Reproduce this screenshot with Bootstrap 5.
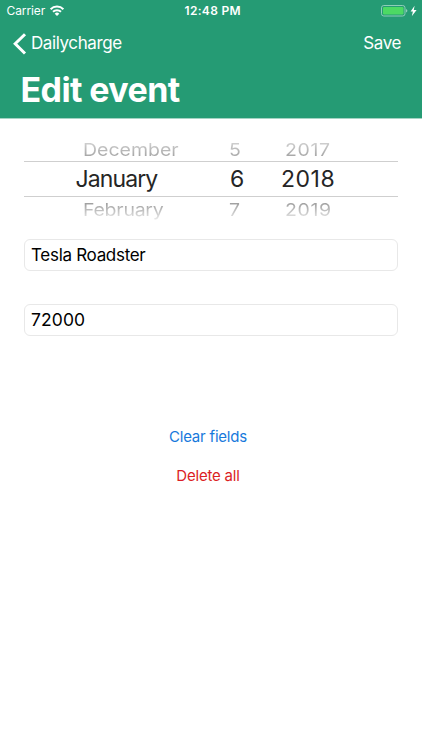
<!DOCTYPE html>
<html lang="en">
<head>
<meta charset="utf-8">
<meta name="viewport" content="width=device-width, initial-scale=1">
<title>Edit event</title>
<link href="https://cdn.jsdelivr.net/npm/bootstrap@5.3.0/dist/css/bootstrap.min.css" rel="stylesheet">
<style>
body{font-family:Inter,"Liberation Sans",sans-serif;color:#000;overflow:hidden}
.app-head{background:#259b74;height:119px;border-bottom:1px solid #a4d3c3}
.status{height:22px;font-size:12px;line-height:22px;display:grid;grid-template-columns:1fr auto 1fr;padding:0 4px 0 6.5px}
.carrier{letter-spacing:-.1px}
.clock{font-weight:600;letter-spacing:.3px;padding-left:1px}
.bar{height:43px;padding:0 21px 0 13px;font-size:17px;letter-spacing:-.4px}
.bar a{color:#fff;line-height:43px}
.title{font-size:34px;font-weight:700;line-height:50px;margin:0 0 0 20.5px;letter-spacing:-.6px}
.main{padding:21px 24px 0}
.wheel{display:grid;white-space:nowrap}
.wheel .side{height:21px;display:grid;grid-template-columns:59px 146px 56px 1fr;font-size:19.5px;line-height:21px}
.wheel .side span{transform:scaleY(.9);color:transparent;-webkit-background-clip:text;background-clip:text}
.wheel .side .year{letter-spacing:.6px}
.above span{background-image:linear-gradient(#d6d6d6 10%,#a0a0a0 90%);height:25px;padding-top:3px;margin-top:-3px}
.below span{background-image:linear-gradient(#999 15%,#e4e4e4 90%);padding-bottom:2px;height:25px;padding-top:3px}
.feb{letter-spacing:-.25px}
.wheel .current{height:36px;display:grid;grid-template-columns:51.5px 154.5px 51px 1fr;font-size:23px;line-height:35px;color:#252525;border-top:1px solid #cfcfcf;border-bottom:1px solid #cfcfcf}
.current .month{letter-spacing:-.9px}
.current .year{letter-spacing:.5px}
.field{height:32px;border:1px solid #e8e8e8;border-radius:6px;padding:0 6px;font-size:17px;letter-spacing:-.3px;color:#000}
.field:focus{box-shadow:none;color:#000}
.event-name{margin-top:21px}
.amount{margin-top:33px;font-size:17.5px;letter-spacing:.1px;padding-bottom:2px}
.acts{margin:91px 6px 0 0;gap:18.5px}
.link-act{font-size:15px;line-height:20px;letter-spacing:-.2px;padding:0;border:0}
.blue{color:#1779dc}.red{color:#db1e24}
</style>
</head>
<body class="bg-white">
<header class="app-head text-white">
  <div class="status">
    <div class="d-flex align-items-center"><span class="carrier">Carrier</span>
      <svg class="ms-1" width="16" height="12" viewBox="0 0 16 12" fill="none" stroke="#fff" stroke-width="2"><path d="M1.6 4.2a9 9 0 0 1 12.8 0M4 6.8a5.7 5.7 0 0 1 8 0"/><path d="M8 11.1 5.7 8.7a3.3 3.3 0 0 1 4.6 0z" fill="#fff" stroke="none"/></svg>
    </div>
    <div class="clock">12:48 PM</div>
    <div class="d-flex align-items-center justify-content-end">
      <svg width="37" height="14" viewBox="0 0 37 14"><rect x=".5" y="1.5" width="23.5" height="10.5" rx="2.3" fill="none" stroke="#8fcdb8"/><rect x="2" y="3" width="20.5" height="7.5" rx="1.2" fill="#4cd964"/><path d="M25 5v3.6q1.4-.6 1.4-1.8T25 5z" fill="#8fcdb8"/><path d="M33.6 1.8 29.6 7.4h2.3L30.8 12.2 35.6 6.1h-2.8z" fill="#fff"/></svg>
    </div>
  </div>
  <nav class="bar d-flex justify-content-between">
    <a href="#" class="text-decoration-none d-flex align-items-center"><svg class="me-1" width="14" height="22" viewBox="0 0 14 22" fill="none" stroke="#fff" stroke-width="3"><path d="M12 1.2 2.2 10.8l9.8 9.7"/></svg><span class="back">Dailycharge</span></a>
    <a href="#" class="text-decoration-none">Save</a>
  </nav>
  <h1 class="title">Edit event</h1>
</header>
<main class="main">
  <div class="wheel">
    <div class="side above"><i></i><span>December</span><span>5</span><span class="year">2017</span></div>
    <div class="current"><i></i><span class="month">January</span><span>6</span><span class="year">2018</span></div>
    <div class="side below"><i></i><span class="feb">February</span><span>7</span><span class="year">2019</span></div>
  </div>
  <input class="field form-control event-name" value="Tesla Roadster" aria-label="Event">
  <input class="field form-control amount" value="72000" aria-label="Amount">
  <div class="acts d-flex flex-column align-items-center">
    <button class="btn link-act blue">Clear fields</button>
    <button class="btn link-act red">Delete all</button>
  </div>
</main>
<script src="https://cdn.jsdelivr.net/npm/bootstrap@5.3.0/dist/js/bootstrap.bundle.min.js"></script>
</body>
</html>
